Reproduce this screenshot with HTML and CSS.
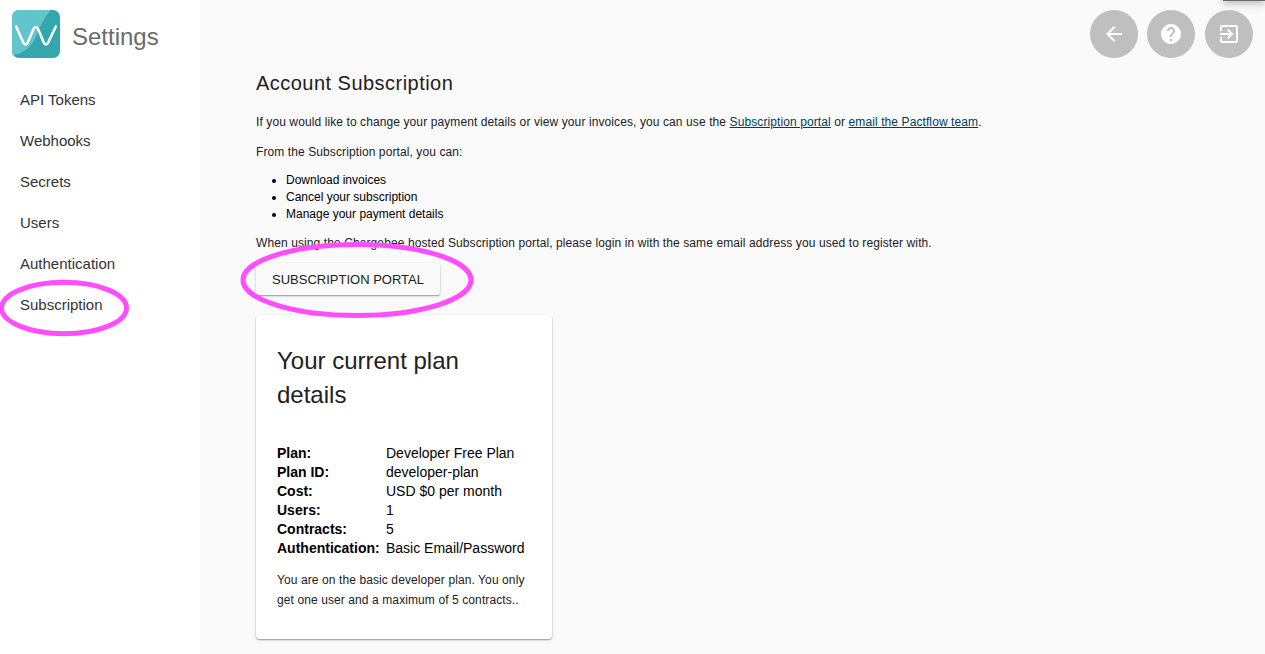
FILE: index.html
```html
<!DOCTYPE html>
<html lang="en">
<head>
<meta charset="utf-8">
<title>Settings</title>
<link rel="stylesheet" href="styles.css">
</head>
<body>
<div class="app">
  <aside class="sidebar">
    <header class="brand">
      <svg class="logo" viewBox="0 0 48 48">
        <defs><clipPath id="tile"><rect width="48" height="48" rx="7"/></clipPath></defs>
        <g clip-path="url(#tile)">
          <rect width="48" height="48" fill="#32a7ae"/>
          <path d="M0 0H39C32 8 29 15 25 24C20 37 12 44 0 45Z" fill="#62c5cb"/>
        </g>
        <path d="M4.200 16.500L10.800 31.500Q13.500 37.500 16.200 31.500L21.300 19.500Q23.800 14.500 26.300 19.500L31.300 31.500Q34 37.500 36.700 31.500L43.800 16.500" fill="none" stroke="#fff" stroke-width="2.600" stroke-linecap="round" stroke-linejoin="round"/>
      </svg>
      <span class="brand-title">Settings</span>
    </header>
    <nav class="nav">
      <a>API Tokens</a>
      <a>Webhooks</a>
      <a>Secrets</a>
      <a>Users</a>
      <a>Authentication</a>
      <a class="current">Subscription
        <svg class="ring ring-nav" viewBox="0 0 132 56"><ellipse cx="66" cy="28" rx="62.500" ry="25.700"/></svg>
      </a>
    </nav>
  </aside>
  <main class="main">
    <div class="actions">
      <button class="round"><svg viewBox="0 0 24 24"><path d="M20 11H7.830l5.590-5.590L12 4l-8 8 8 8 1.410-1.410L7.830 13H20v-2z"/></svg></button>
      <button class="round"><svg viewBox="0 0 24 24"><path d="M12 2C6.480 2 2 6.480 2 12s4.480 10 10 10 10-4.480 10-10S17.520 2 12 2zm1 17h-2v-2h2v2zm2.070-7.750l-.9.920C13.450 12.900 13 13.500 13 15h-2v-.5c0-1.100.45-2.100 1.170-2.830l1.240-1.260c.37-.36.59-.86.59-1.410 0-1.100-.9-2-2-2s-2 .9-2 2H8c0-2.210 1.790-4 4-4s4 1.790 4 4c0 .88-.36 1.680-.93 2.250z"/></svg></button>
      <button class="round exit"><svg viewBox="0 0 24 24"><path d="M10.090 15.590L11.500 17l5-5-5-5-1.410 1.410L12.670 11H3v2h9.670l-2.580 2.590zM19 3H5c-1.110 0-2 .9-2 2v4h2V5h14v14H5v-4H3v4c0 1.100.89 2 2 2h14c1.100 0 2-.9 2-2V5c0-1.100-.9-2-2-2z"/></svg></button>
    </div>
    <div class="edge-popup"></div>
    <section class="content">
      <h1>Account Subscription</h1>
      <p>If you would like to change your payment details or view your invoices, you can use the <a class="link">Subscription portal</a> or <a class="link">email the Pactflow team</a>.</p>
      <p>From the Subscription portal, you can:</p>
      <ul>
        <li>Download invoices</li>
        <li>Cancel your subscription</li>
        <li>Manage your payment details</li>
      </ul>
      <p>When using the Chargebee hosted Subscription portal, please login in with the same email address you used to register with.</p>
      <div class="portal">
        <button class="portal-button">SUBSCRIPTION PORTAL</button>
        <svg class="ring ring-portal" viewBox="0 0 234 78"><ellipse cx="117" cy="39" rx="114" ry="35.500"/></svg>
      </div>
      <article class="card">
        <h2>Your current plan details</h2>
        <dl>
          <dt>Plan:</dt><dd>Developer Free Plan</dd>
          <dt>Plan ID:</dt><dd>developer-plan</dd>
          <dt>Cost:</dt><dd>USD $0 per month</dd>
          <dt>Users:</dt><dd>1</dd>
          <dt>Contracts:</dt><dd>5</dd>
          <dt>Authentication:</dt><dd>Basic Email/Password</dd>
        </dl>
        <p>You are on the basic developer plan. You only get one user and a maximum of 5 contracts..</p>
      </article>
    </section>
  </main>
</div>
</body>
</html>
```
FILE: styles.css
```css
* { box-sizing: border-box; }
body {
  margin: 0;
  font-family: "Liberation Sans", Arial, sans-serif;
  color: #000;
  background: #fafafa;
}
.app { display: flex; height: 654px; overflow: hidden; }
.sidebar { width: 200px; flex: none; background: #fff; }
.brand { display: flex; align-items: center; gap: 12px; padding: 10px 12px 0; }
.logo { width: 48px; height: 48px; }
.brand-title { font-size: 24px; line-height: 34px; padding-top: 6px; color: #6b6b6b; }
.nav { padding: 21px 0 0 20px; }
.nav a {
  display: block;
  height: 41px;
  line-height: 41px;
  font-size: 15px;
  color: #333;
}
.nav .current { position: relative; }
.ring { position: absolute; overflow: visible; fill: none; stroke: #ff4dff; stroke-width: 5; pointer-events: none; }
.ring-nav { left: -22px; top: -4.5px; width: 132px; height: 56px; }
.main { position: relative; flex: 1; }
.actions { display: flex; justify-content: flex-end; gap: 9px; padding: 10px 12px 0 0; }
.round {
  width: 48px;
  height: 48px;
  padding: 12px;
  border: 0;
  border-radius: 50%;
  background: #bfbfbf;
}
.exit { margin-left: 1px; }
.round svg { display: block; width: 24px; height: 24px; fill: #fff; }
.edge-popup {
  position: absolute;
  right: 0;
  top: -9px;
  width: 42px;
  height: 10px;
  background: #6c6a6c;
  box-shadow: 0 2px 8px rgba(0, 0, 0, .3);
}
.content { padding: 9px 0 0 56px; }
h1 {
  margin: 0 0 13px;
  font-size: 20px;
  line-height: 32px;
  font-weight: 400;
  letter-spacing: .47px;
  color: #212121;
}
p {
  margin: 0 0 10px;
  font-size: 12px;
  line-height: 20px;
  letter-spacing: .098px;
  color: #212121;
}
.link { color: #003d5b; text-decoration: underline; }
ul { margin: 0 0 10px; padding-left: 30px; font-size: 12px; line-height: 17px; }
.portal { position: relative; width: 184px; }
.portal-button {
  display: block;
  width: 184px;
  height: 32px;
  padding: 1px 0 0;
  border: 0;
  border-radius: 2px;
  background: #fafafa;
  font: 13px/31px "Liberation Sans", Arial, sans-serif;
  color: #212121;
  box-shadow: 0 1px 3px rgba(0, 0, 0, .2), 0 1px 1px rgba(0, 0, 0, .24);
}
.ring-portal { left: -16px; top: -22px; width: 234px; height: 78px; z-index: 1; }
.card {
  width: 296px;
  height: 324px;
  margin-top: 20px;
  padding: 29px 21px 0;
  border-radius: 4px;
  background: #fff;
  box-shadow: 0 1px 3px rgba(0, 0, 0, .2), 0 1px 1px rgba(0, 0, 0, .24);
}
h2 { margin: 0 0 32px; font-size: 24px; line-height: 34px; font-weight: 400; color: #212121; }
dl {
  display: grid;
  grid-template-columns: 109px 1fr;
  margin: 0 0 12px;
  font-size: 14px;
  line-height: 19px;
  white-space: nowrap;
}
dt { font-weight: 700; }
dd { margin: 0; }
```
